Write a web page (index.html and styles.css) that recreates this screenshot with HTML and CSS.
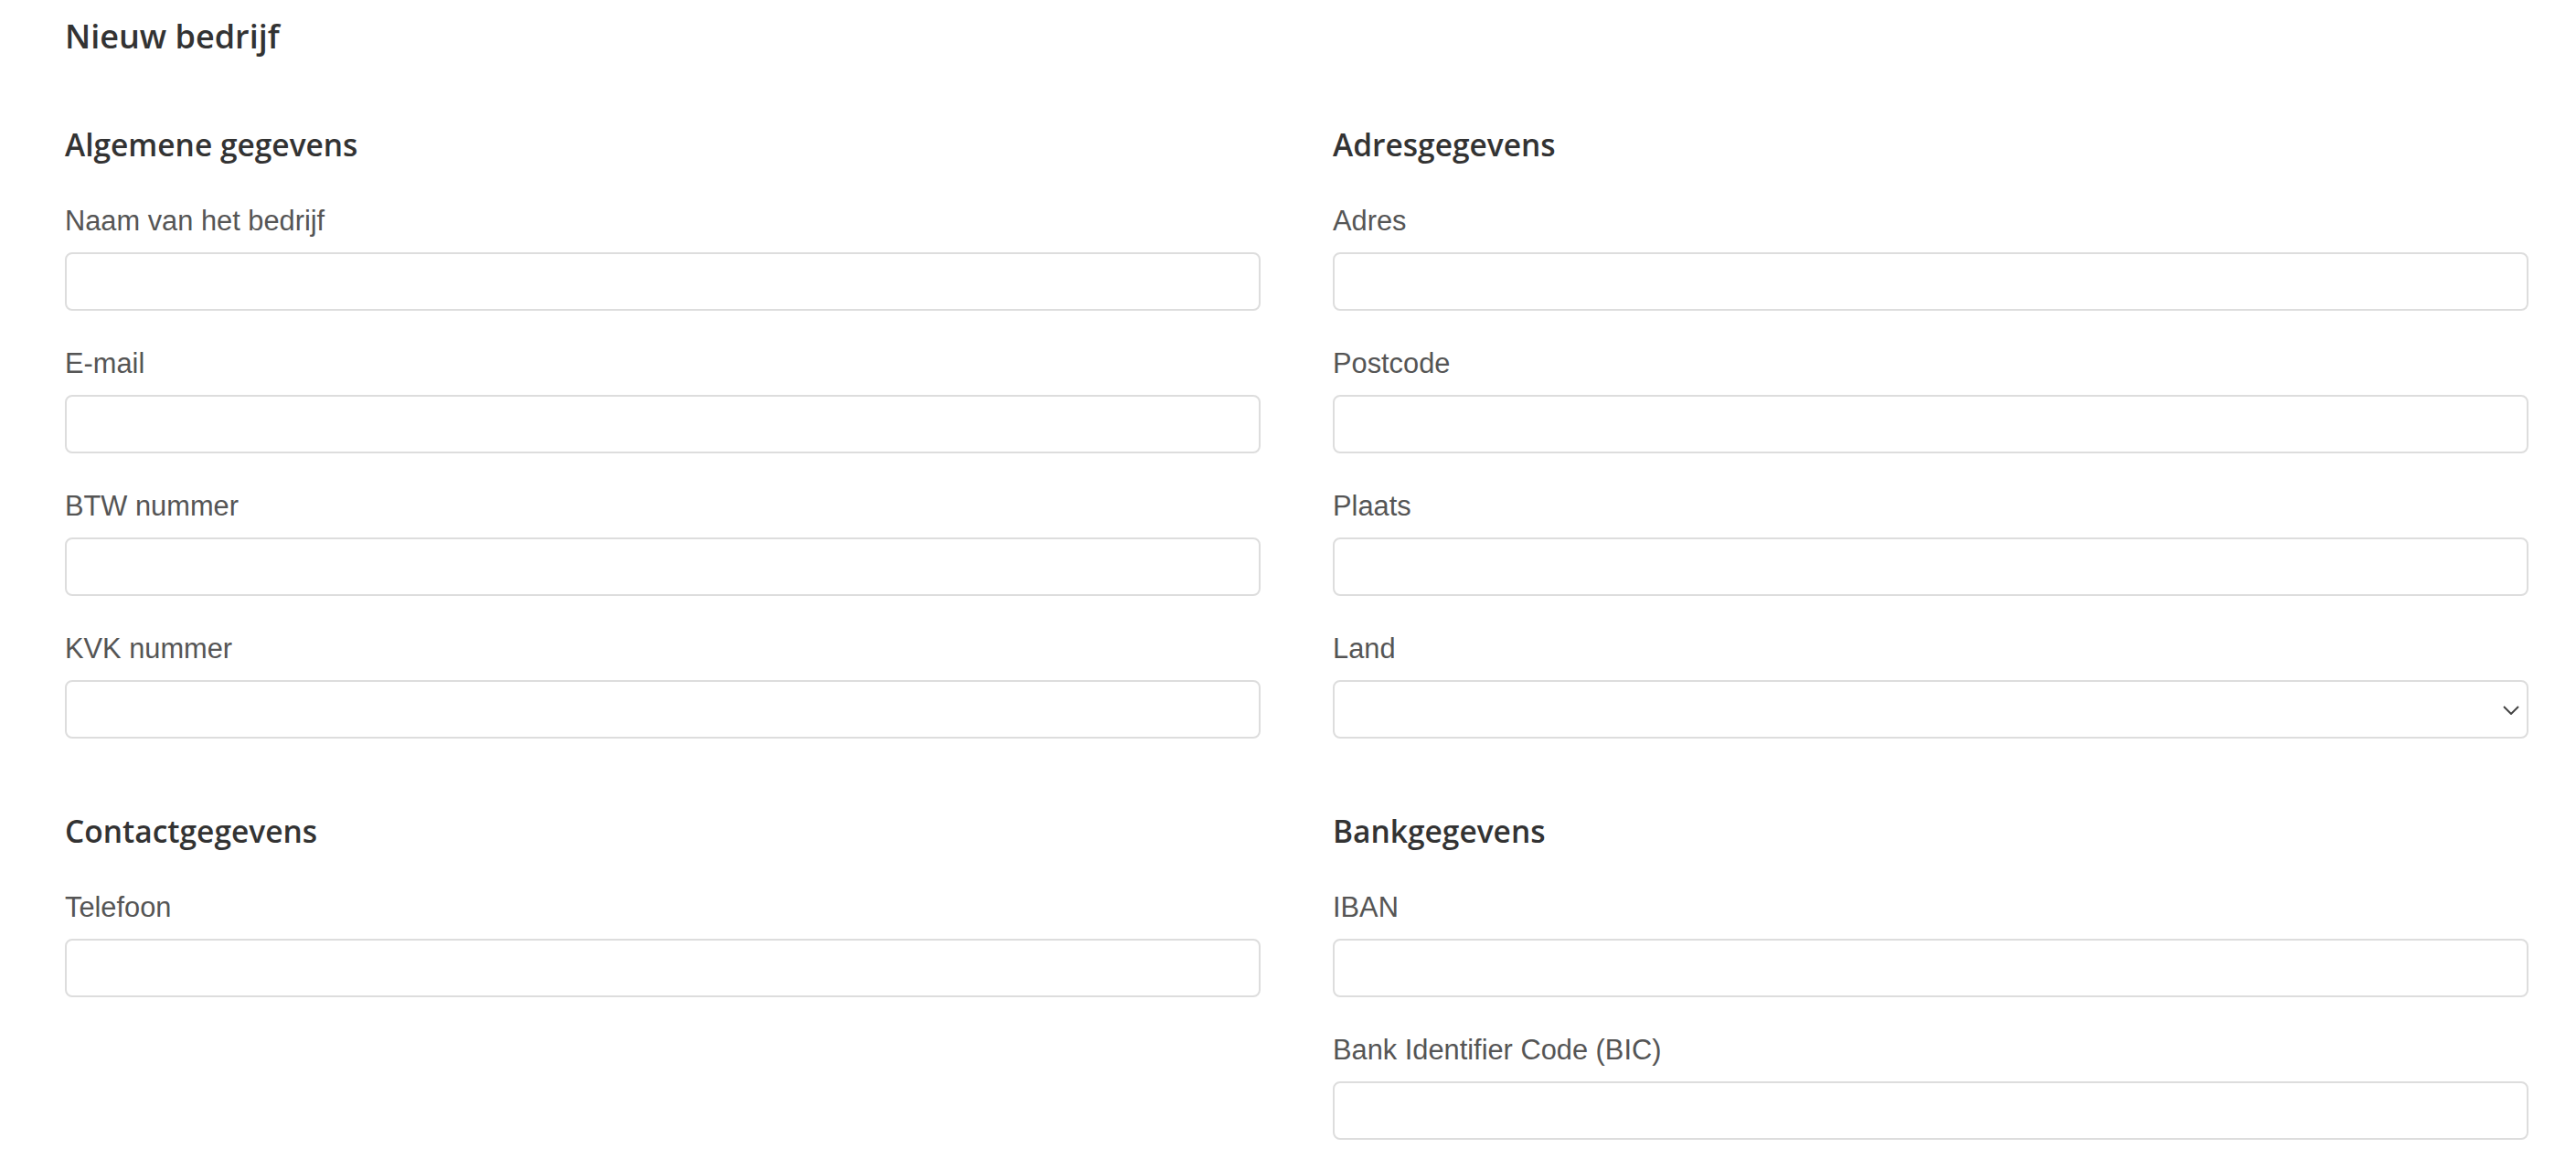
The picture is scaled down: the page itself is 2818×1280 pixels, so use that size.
FILE: index.html
```html
<!DOCTYPE html>
<html lang="nl">
<head>
<meta charset="utf-8">
<title>Nieuw bedrijf</title>
<link rel="stylesheet" href="styles.css">
</head>
<body>
<main class="page">
  <h1 class="page-title">Nieuw bedrijf</h1>
  <form class="sections">
    <section class="section">
      <h2 class="section-title">Algemene gegevens</h2>
      <div class="field"><label class="label">Naam van het bedrijf</label><input class="input" type="text"></div>
      <div class="field"><label class="label">E-mail</label><input class="input" type="text"></div>
      <div class="field"><label class="label">BTW nummer</label><input class="input" type="text"></div>
      <div class="field"><label class="label">KVK nummer</label><input class="input" type="text"></div>
    </section>
    <section class="section">
      <h2 class="section-title">Adresgegevens</h2>
      <div class="field"><label class="label">Adres</label><input class="input" type="text"></div>
      <div class="field"><label class="label">Postcode</label><input class="input" type="text"></div>
      <div class="field"><label class="label">Plaats</label><input class="input" type="text"></div>
      <div class="field">
        <label class="label">Land</label>
        <div class="select-wrap">
          <select class="input select"><option></option></select>
          <svg class="chevron" width="18" height="10" viewBox="0 0 18 10"><path d="M1 1 L9 9 L17 1" fill="none" stroke="#444" stroke-width="2"/></svg>
        </div>
      </div>
    </section>
    <section class="section">
      <h2 class="section-title">Contactgegevens</h2>
      <div class="field"><label class="label">Telefoon</label><input class="input" type="text"></div>
    </section>
    <section class="section">
      <h2 class="section-title">Bankgegevens</h2>
      <div class="field"><label class="label">IBAN</label><input class="input" type="text"></div>
      <div class="field"><label class="label">Bank Identifier Code (BIC)</label><input class="input" type="text"></div>
    </section>
  </form>
</main>
</body>
</html>
```

FILE: styles.css
```css
* { box-sizing: border-box; }
html, body { margin: 0; padding: 0; background: #fff; }
.page {
  padding: 18px 52px 0 71px;
}
.page-title {
  margin: 0;
  font-family: "Open Sans", Lato, sans-serif;
  font-weight: 600;
  font-size: 36px;
  line-height: 44px;
  color: #333;
}
.sections {
  margin-top: 76px;
  display: grid;
  grid-template-columns: 1fr 1fr;
  column-gap: 79px;
  row-gap: 81px;
}
.section {
  display: flex;
  flex-direction: column;
}
.section-title {
  margin: 0 0 45px 0;
  font-family: "Open Sans", Lato, sans-serif;
  font-weight: 600;
  font-size: 33.5px;
  line-height: 40px;
  color: #333;
}
.field {
  display: flex;
  flex-direction: column;
}
.field + .field { margin-top: 39px; }
.label {
  font-family: "Liberation Sans", Arial, sans-serif;
  font-size: 30.8px;
  line-height: 37px;
  color: #555;
  margin-bottom: 16px;
}
.input {
  display: block;
  width: 100%;
  height: 64px;
  border: 2px solid #dddddd;
  border-radius: 8px;
  background: #fff;
  font-family: "Liberation Sans", Arial, sans-serif;
  font-size: 28px;
  padding: 0 16px;
  outline: none;
}
.select-wrap { position: relative; }
.select {
  appearance: none;
  -webkit-appearance: none;
}
.chevron {
  position: absolute;
  right: 10px;
  top: 28px;
  pointer-events: none;
}
```
